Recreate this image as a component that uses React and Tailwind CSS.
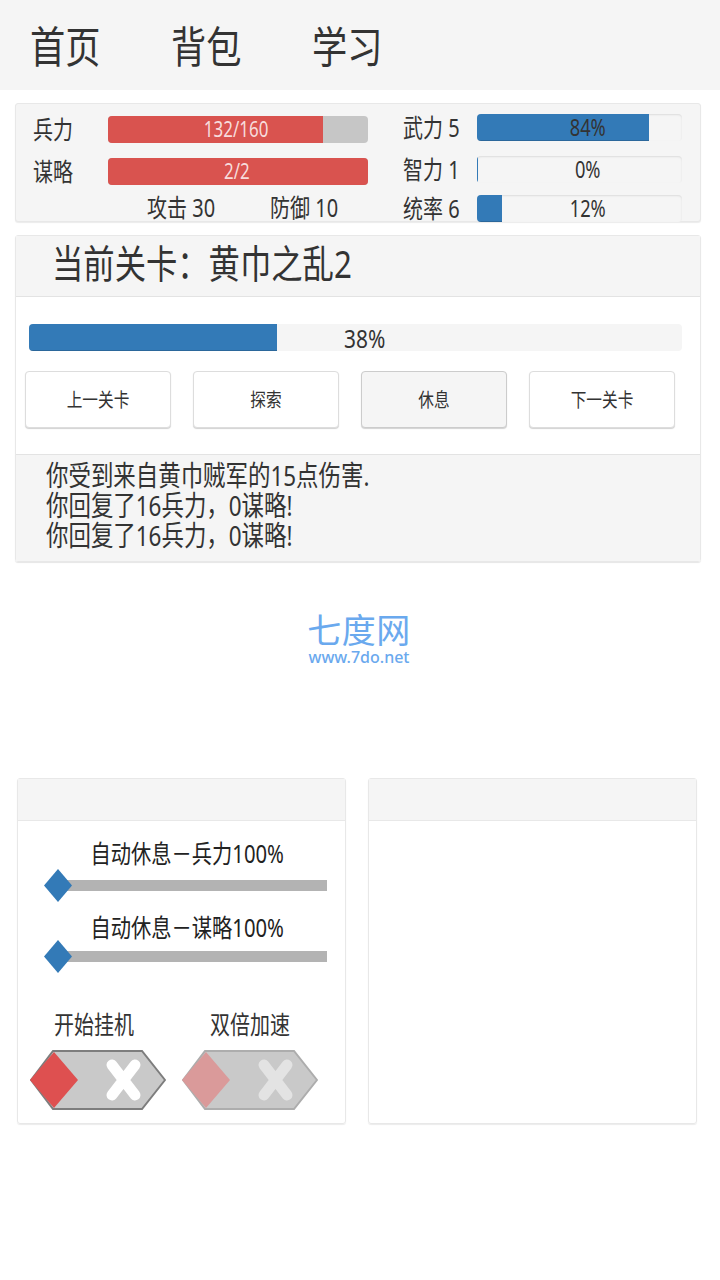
import React from 'react';

const FONT = "font-['Noto_Sans','Noto_Sans_CJK_SC',sans-serif]";

// the whole screenshot is squeezed sideways, so text gets narrowed too
const Txt = ({ className = '', children }) => (
  <span className={`inline-block origin-left scale-x-[0.87] scale-y-[1.08] whitespace-nowrap ${className}`}>{children}</span>
);

const Mid = ({ children }) => (
  <span className="inline-block scale-x-[0.87] scale-y-[1.08] whitespace-nowrap">{children}</span>
);

const Bar = ({ value, color, className = '', textClass = '', label }) => (
  <div className={`relative rounded-[4px] ${className}`}>
    <div className="h-full overflow-hidden rounded-[4px]">
      <div className={`h-full min-w-[1px] ${color}`} style={{ width: `${value}%` }} />
    </div>
    <div className={`absolute inset-0 flex items-center justify-center leading-none ${textClass}`}>
      <Mid>{label}</Mid>
    </div>
  </div>
);

const Stat = ({ label, value, className = '' }) => (
  <div className={`flex items-center h-[27px] ${className}`}>
    <div className="w-[74px] shrink-0 text-[23px] leading-none text-[#333]"><Txt>{label}</Txt></div>
    <Bar
      value={value}
      label={`${value}%`}
      color="bg-[#337ab7] shadow-[inset_0_-1px_0_rgba(0,0,0,0.15)]"
      className="w-[205px] h-[27px] bg-[#f5f5f5] shadow-[inset_0_1px_2px_rgba(0,0,0,0.1)]"
      textClass="text-[#333] text-[21px] pl-[16px]"
    />
  </div>
);

const Btn = ({ children, active }) => (
  <div className={`w-[146px] h-[57px] flex items-center justify-center rounded-[4px] border shadow-[0_1px_1px_rgba(0,0,0,0.18)] text-[18px] text-[#333] ${active ? 'bg-[#f5f5f5] border-[#ccc]' : 'bg-white border-[#ddd]'}`}>
    <Mid>{children}</Mid>
  </div>
);

const Slider = ({ label, className = '', trackClass = '' }) => (
  <div className={className}>
    <div className="h-[30px] pl-[11px] flex items-center justify-center text-[23.3px] leading-none text-[#222]">
      <Mid>{label}</Mid>
    </div>
    <div className={`relative ml-[39px] w-[270px] h-[11px] bg-[#b3b3b3] ${trackClass}`}>
      <svg className="absolute left-[-14px] top-[-12px]" width="30" height="35" viewBox="0 0 30 35">
        <polygon points="15,1 29,17.5 15,34 1,17.5" fill="#337ab7" />
      </svg>
    </div>
  </div>
);

const Toggle = ({ label, dim, labelClass = '' }) => (
  <div className="w-[136px] shrink-0">
    <div className={`h-[32px] flex items-center justify-center text-[23px] leading-none text-[#333] ${labelClass}`}>
      <Mid>{label}</Mid>
    </div>
    <svg className="mt-[10px] block" width="136" height="60" viewBox="0 0 136 60">
      <polygon
        points="23,1 112,1 135,30 112,59 23,59 1,30"
        fill="#c9c9c9"
        stroke={dim ? '#adadad' : '#7d7d7d'}
        strokeWidth="2"
      />
      <polygon points="0,30 24,2 48,30 24,58" fill={dim ? '#da9a9a' : '#de5050'} />
      <path d="M82 15 L105 45 M105 15 L82 45" stroke={dim ? '#e3e3e3' : '#ffffff'} strokeWidth="11" strokeLinecap="round" />
    </svg>
  </div>
);

export default function App() {
  return (
    <div className={`w-[720px] h-[1280px] bg-white overflow-hidden ${FONT}`}>
      {/* top tabs */}
      <div className="h-[90px] bg-[#f5f5f5] flex items-center pl-[30px] pt-[4px] text-[40.5px] leading-none text-[#333]">
        <div className="w-[141px]"><Txt>首页</Txt></div>
        <div className="w-[141px]"><Txt>背包</Txt></div>
        <div className="w-[141px]"><Txt>学习</Txt></div>
      </div>

      {/* stats */}
      <div className="mt-[13px] ml-[15px] w-[686px] h-[119px] bg-[#f5f5f5] rounded-[3px] border border-[#e8e8e8] shadow-[0_1px_1px_rgba(0,0,0,0.08)] flex">
        <div className="w-[387px] shrink-0 pl-[17px] pt-[12px]">
          <div className="flex items-center h-[27px]">
            <div className="w-[75px] shrink-0 text-[23px] leading-none text-[#333]"><Txt>兵力</Txt></div>
            <Bar value={82.7} label="132/160" color="bg-[#d9534f]" className="w-[260px] h-[27px] bg-[#c6c6c6]" textClass="text-[#f7dcdc] text-[19.5px] pr-[3px] pb-[1px]" />
          </div>
          <div className="flex items-center h-[27px] mt-[15px]">
            <div className="w-[75px] shrink-0 text-[23px] leading-none text-[#333]"><Txt>谋略</Txt></div>
            <Bar value={100} label="2/2" color="bg-[#d9534f]" className="w-[260px] h-[27px] bg-[#c6c6c6]" textClass="text-[#f7dcdc] text-[19.5px] pr-[3px] pb-[1px]" />
          </div>
          <div className="flex h-[27px] mt-[9px] pl-[114px] text-[23px] leading-none text-[#333] items-center">
            <div className="w-[123px]"><Txt>攻击 30</Txt></div>
            <Txt>防御 10</Txt>
          </div>
        </div>
        <div className="pt-[10px] flex flex-col">
          <Stat label="武力 5" value={84} />
          <Stat label="智力 1" value={0} className="mt-[15px]" />
          <Stat label="统率 6" value={12} className="mt-[12px]" />
        </div>
      </div>

      {/* current stage */}
      <div className="mt-[13px] ml-[15px] w-[686px] h-[327px] rounded-[3px] border border-[#e8e8e8] shadow-[0_1px_1px_rgba(0,0,0,0.1)] flex flex-col">
        <div className="h-[61px] bg-[#f5f5f5] border-b border-[#e3e3e3] pl-[36px] pb-[4px] flex items-center text-[36px] leading-none text-[#333]">
          <Txt>当前关卡：黄巾之乱2</Txt>
        </div>
        <div className="h-[157px] pt-[27px]">
          <Bar
            value={38}
            label="38%"
            color="bg-[#337ab7] shadow-[inset_0_-1px_0_rgba(0,0,0,0.15)]"
            className="ml-[13px] w-[653px] h-[27px] bg-[#f5f5f5]"
            textClass="text-[#333] text-[24px] pl-[18px]"
          />
          <div className="flex gap-[22px] ml-[9px] mt-[20px]">
            <Btn>上一关卡</Btn>
            <Btn>探索</Btn>
            <Btn active>休息</Btn>
            <Btn>下一关卡</Btn>
          </div>
        </div>
        <div className="flex-1 bg-[#f5f5f5] border-t border-[#e3e3e3] pl-[30px] pt-[7px] text-[25.8px] leading-[27px] text-[#333]">
          <div className="h-[30px]"><Txt>你受到来自黄巾贼军的15点伤害.</Txt></div>
          <div className="h-[30px]"><Txt>你回复了16兵力，0谋略!</Txt></div>
          <div className="h-[30px]"><Txt>你回复了16兵力，0谋略!</Txt></div>
        </div>
      </div>

      {/* watermark logo */}
      <div className="h-[216px] pt-[49px] flex flex-col items-center pr-[2px] text-[#6aa9ee]">
        <div className="h-[38px] text-[34px] leading-[38px] tracking-[0.5px]">七度网</div>
        <div className="h-[16px] text-[16px] leading-[16px] font-medium">www.7do.net</div>
      </div>

      {/* bottom panels */}
      <div className="flex gap-[22px] ml-[17px]">
        <div className="w-[329px] h-[346px] rounded-[3px] border border-[#e8e8e8] shadow-[0_1px_1px_rgba(0,0,0,0.08)]">
          <div className="h-[42px] bg-[#f5f5f5] border-b border-[#e8e8e8]" />
          <div className="pt-[18px]">
            <Slider label="自动休息－兵力100%" trackClass="mt-[11px]" />
            <Slider label="自动休息－谋略100%" className="mt-[22px]" trackClass="mt-[8px]" />
          </div>
          <div className="flex gap-[16px] ml-[12px] mt-[46px]">
            <Toggle label="开始挂机" labelClass="pr-[8px]" />
            <Toggle label="双倍加速" dim />
          </div>
        </div>
        <div className="w-[329px] h-[346px] rounded-[3px] border border-[#e8e8e8] shadow-[0_1px_1px_rgba(0,0,0,0.08)]">
          <div className="h-[42px] bg-[#f5f5f5] border-b border-[#e8e8e8]" />
        </div>
      </div>
    </div>
  );
}
